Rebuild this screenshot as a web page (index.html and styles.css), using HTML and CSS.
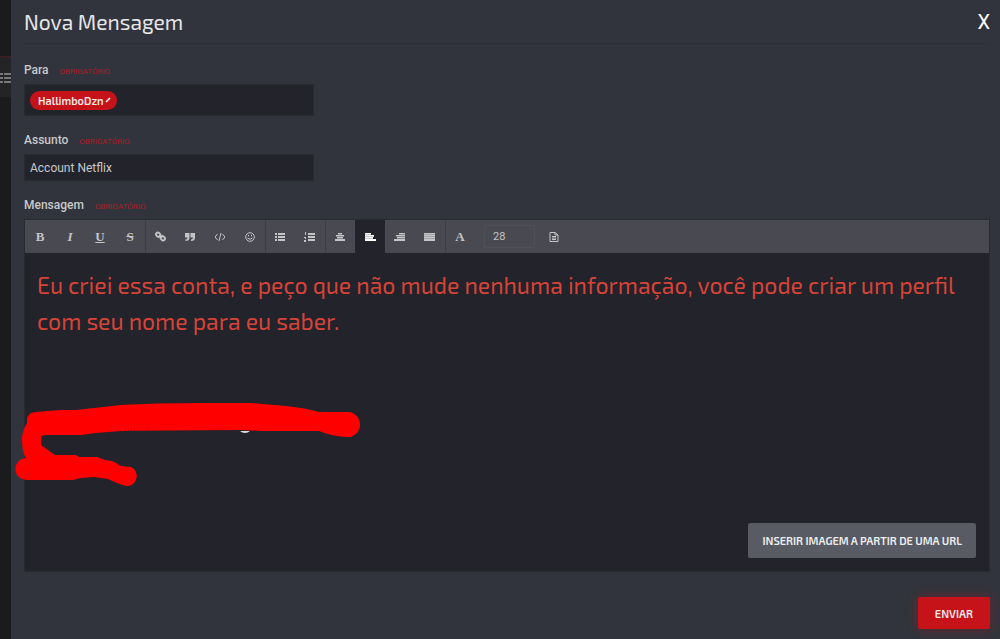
FILE: index.html
```html
<!DOCTYPE html>
<html lang="pt-BR">

<head>
    <meta charset="UTF-8">
    <meta name="viewport" content="width=device-width, initial-scale=1.0">
    <title>Nova Mensagem</title>
    <link rel="stylesheet" href="styles.css">
</head>

<body>
    <div class="page">
        <aside class="backdrop">
            <svg class="menu-icon" viewBox="0 0 11 10" width="11" height="10">
                <path d="M0 0h3v2H0zM4 0h7v2H4zM0 4h3v2H0zM4 4h7v2H4zM0 8h3v2H0zM4 8h7v2H4z" />
            </svg>
        </aside>

        <main class="modal">
            <header class="modal-header">
                <h1>Nova Mensagem</h1>
                <button type="button" class="close-btn" aria-label="Fechar">X</button>
            </header>

            <form class="message-form">
                <div class="field">
                    <div class="field-label">
                        <label for="to">Para</label>
                        <span class="required">Obrigatório</span>
                    </div>
                    <div class="input-box recipients">
                        <button type="button" class="tag">HallimboDzn
                            <svg viewBox="0 0 6 6" width="6" height="6"><path d="M1 5L5 1" stroke="#fff" stroke-width="1.4" /></svg>
                        </button>
                        <input type="text" id="to" class="tag-input">
                    </div>
                </div>

                <div class="field">
                    <div class="field-label">
                        <label for="subject">Assunto</label>
                        <span class="required">Obrigatório</span>
                    </div>
                    <input type="text" id="subject" class="input-box subject" value="Account Netflix">
                </div>

                <div class="field">
                    <div class="field-label">
                        <label for="message">Mensagem</label>
                        <span class="required">Obrigatório</span>
                    </div>

                    <div class="editor">
                        <div class="toolbar">
                            <div class="tool-group">
                                <button type="button" class="tool"><b>B</b></button>
                                <button type="button" class="tool"><i>I</i></button>
                                <button type="button" class="tool"><u>U</u></button>
                                <button type="button" class="tool"><s>S</s></button>
                            </div>
                            <div class="tool-group">
                                <button type="button" class="tool" aria-label="Link">
                                    <svg viewBox="0 0 12 12" width="11" height="11" class="line link"><rect x="1" y="2" width="5" height="4" rx="2" transform="rotate(42 3.5 4)" /><rect x="6" y="6" width="5" height="4" rx="2" transform="rotate(42 8.5 8)" /><path d="M4.500 4.500l3 3" /></svg>
                                </button>
                                <button type="button" class="tool" aria-label="Citação">
                                    <svg viewBox="0 0 12 12" width="12" height="12"><path d="M1 2h4.500v4.500q0 3.500-4 3.500V8.500q2 0 2-2H1zM6.500 2H11v4.500q0 3.500-4 3.500V8.500q2 0 2-2H6.500z" /></svg>
                                </button>
                                <button type="button" class="tool" aria-label="Código">
                                    <svg viewBox="0 0 12 12" width="12" height="12" class="line"><path d="M3.500 3L1 6l2.500 3M8.500 3L11 6 8.500 9M7 2L5 10" /></svg>
                                </button>
                                <button type="button" class="tool" aria-label="Emoji">
                                    <svg viewBox="0 0 12 12" width="12" height="12" class="line"><circle cx="6" cy="6" r="4.300" /><path d="M3.500 7q2.500 2.500 5 0M4.500 3.800v1.500M7.500 3.800v1.500" /></svg>
                                </button>
                            </div>
                            <div class="tool-group">
                                <button type="button" class="tool" aria-label="Lista">
                                    <svg viewBox="0 0 12 10" width="12" height="10"><path d="M1 1h2v2H1zM4 1h7v2H4zM1 4h2v2H1zM4 4h7v2H4zM1 7h2v2H1zM4 7h7v2H4z" /></svg>
                                </button>
                                <button type="button" class="tool" aria-label="Lista numerada">
                                    <svg viewBox="0 0 12 10" width="12" height="10"><path d="M1 0h1v3H1zM0 5h2v1H0zM1 6h1v1H1zM0 8h2v2H0zM4 1h7v2H4zM4 4h7v2H4zM4 7h7v2H4z" /></svg>
                                </button>
                            </div>
                            <div class="tool-group">
                                <button type="button" class="tool" aria-label="Centralizar">
                                    <svg viewBox="0 0 12 10" width="12" height="10"><path d="M4 1h4v1.500H4zM2 3h8v1.500H2zM3 5h6v1.500H3zM1 7h10v2H1z" /></svg>
                                </button>
                                <button type="button" class="tool active" aria-label="Alinhar à esquerda">
                                    <svg viewBox="0 0 12 10" width="12" height="10"><path d="M1 1h6v1.700H1zM1 3h9v1.700H1zM1 5h8v1.700H1zM1 7h11v2H1z" /></svg>
                                </button>
                                <button type="button" class="tool" aria-label="Alinhar à direita">
                                    <svg viewBox="0 0 12 10" width="12" height="10"><path d="M5 1h6v1.500H5zM2 3h9v1.500H2zM3 5h8v1.500H3zM0 7h11v2H0z" /></svg>
                                </button>
                                <button type="button" class="tool" aria-label="Justificar">
                                    <svg viewBox="0 0 12 10" width="12" height="10"><path d="M0 1h11v1.700H0zM0 3h11v1.700H0zM0 5h11v1.700H0zM0 7h11v2H0z" /></svg>
                                </button>
                            </div>
                            <div class="tool-group">
                                <button type="button" class="tool"><b>A</b></button>
                                <input type="text" class="font-size" aria-label="Tamanho da fonte" value="28">
                                <button type="button" class="tool" aria-label="Rascunho">
                                    <svg viewBox="0 0 12 12" width="12" height="12" class="line"><path d="M2 1.500h5L10 4v6.500H2zM7 1.500V4h3M4 5.500h4M4 7h4M4 8.500h4" /></svg>
                                </button>
                            </div>
                        </div>

                        <textarea id="message" class="editor-text" spellcheck="false">Eu criei essa conta, e peço que não mude nenhuma informação, você pode criar um perfil com seu nome para eu saber.</textarea>

                        <div class="editor-footer">
                            <button type="button" class="insert-btn">Inserir imagem a partir de uma URL</button>
                        </div>

                        <svg class="scribble" viewBox="0 0 360 100" width="360" height="100">
                            <path d="M26 28Q28 22 35 22L60 20L75 20L120 15Q155 13 205 13L250 13L285 16Q305 18 318 22H348A12 12 0 0 1 345 47Q330 46 318 41L262 41L240 40L120 41L95 43L80 45L45 45L40 46V55L54 65H75L78 67L96 67L104 70Q112 70 120 76L130 77A10 10 0 0 1 125 96Q117 94 107 89L93 87L80 88L72 90H26A11 11 0 0 1 25 68Q21 62 21 50Q21 41 26 33Z" fill="#ff0000" />
                            <path d="M239 41h10q-2 2-5 2t-5-2z" fill="#dddddd" />
                            <path d="M124 41h96" stroke="#22232b" stroke-dasharray="1 2" />
                        </svg>
                    </div>
                </div>

                <div class="form-footer">
                    <button type="submit" class="send-btn">Enviar</button>
                </div>
            </form>
        </main>
    </div>
</body>

</html>
```

FILE: styles.css
```css
* {
    box-sizing: border-box;
}

body {
    margin: 0;
    background-color: #31343c;
    color: #c8c8ca;
    font-family: Roboto, sans-serif;
    font-size: 12px;
}

button,
input,
textarea {
    font-family: inherit;
    outline: none;
}

button {
    cursor: pointer;
}

.page {
    display: flex;
    min-height: 100vh;
}

.backdrop {
    width: 11px;
    flex-shrink: 0;
    padding-top: 56px;
    background-color: #1b1b1d;
}

.menu-icon {
    display: block;
    width: 11px;
    height: 41px;
    padding: 16px 0 14px;
    border-top: 1px solid #4a1b20;
    background-color: #242426;
    fill: #777779;
}

.modal {
    flex: 1;
    min-width: 0;
    padding: 0 10px 0 13px;
}

.modal-header {
    display: flex;
    justify-content: space-between;
    align-items: center;
    height: 44px;
    border-bottom: 1px solid #2d3037;
}

h1 {
    margin: 0;
    color: #e6e6e6;
    font-family: "Exo 2", "Noto Sans", sans-serif;
    font-size: 21px;
    font-weight: 400;
}

.close-btn {
    padding: 0;
    border: none;
    background: none;
    color: #ffffff;
    font-size: 20px;
}

.message-form {
    display: flex;
    flex-direction: column;
    gap: 15px;
    padding-top: 17px;
}

.field-label {
    display: flex;
    align-items: center;
    gap: 11px;
    height: 17px;
    margin-bottom: 6px;
    font-weight: 500;
}

.required {
    padding-top: 3px;
    color: #b01c25;
    font-size: 8px;
    font-weight: 400;
    text-transform: uppercase;
}

.input-box {
    display: flex;
    width: 30%;
    border: 1px solid #292b33;
    background-color: #22232b;
}

.recipients {
    align-items: center;
    height: 32px;
    padding: 0 5px;
}

.tag {
    display: flex;
    align-items: center;
    gap: 1px;
    height: 19px;
    padding: 0 6px 0 8px;
    border: none;
    border-radius: 10px;
    background-color: #c61219;
    color: #f4e8e8;
    font-family: "Exo 2", "Noto Sans", sans-serif;
    font-size: 11px;
    font-weight: 600;
}

.tag-input {
    flex: 1;
    min-width: 0;
    border: none;
    background: none;
    color: inherit;
}

.subject {
    height: 27px;
    padding: 0 5px;
    color: #c8c8ca;
    font-size: 12px;
}

.editor {
    position: relative;
    border: 1px solid #292b33;
    background-color: #22232b;
}

.toolbar {
    display: flex;
    height: 33px;
    background-color: #484951;
}

.tool-group {
    display: flex;
    align-items: center;
    box-shadow: 1px 0 0 #3c3d45;
}

.tool-group:last-child {
    box-shadow: none;
}

.tool {
    display: flex;
    align-items: center;
    justify-content: center;
    width: 30px;
    height: 33px;
    padding: 0;
    border: none;
    background: none;
    color: #c4c4c6;
    fill: #c4c4c6;
    font-family: "Liberation Serif", serif;
    font-size: 13px;
    font-weight: 700;
}

.tool.active {
    background-color: #22232b;
    fill: #ffffff;
}

.line {
    fill: none;
    stroke: #c4c4c6;
    stroke-width: 1;
}

.link {
    stroke-width: 2;
}

.font-size {
    width: 51px;
    height: 23px;
    margin: 0 4px 0 9px;
    padding: 0 8px;
    border: 1px solid #4e4f58;
    background: none;
    color: #c4c4c6;
    font-size: 11px;
}

.editor-text {
    display: block;
    width: 100%;
    height: 270px;
    padding: 14px 12px;
    border: none;
    background: none;
    color: #d84338;
    font-family: "Exo 2", "Noto Sans", sans-serif;
    font-size: 23px;
    line-height: 36px;
    resize: none;
}

.editor-footer {
    display: flex;
    justify-content: flex-end;
    padding: 0 13px 13px;
}

.insert-btn,
.send-btn {
    border: none;
    border-radius: 2px;
    color: #eeeeee;
    font-family: "Exo 2", "Noto Sans", sans-serif;
    font-size: 11px;
    font-weight: 600;
    text-transform: uppercase;
}

.insert-btn {
    height: 35px;
    padding: 0 14px;
    background-color: #585a64;
}

.send-btn {
    height: 32px;
    padding: 0 17px;
    background-color: #c61219;
    box-shadow: 0 0 12px rgba(198, 18, 25, 0.4);
}

.form-footer {
    display: flex;
    justify-content: flex-end;
    padding: 10px 0;
}

/* red pen stroke drawn over the message */
.scribble {
    position: absolute;
    top: 170px;
    left: -24px;
    pointer-events: none;
}
```
